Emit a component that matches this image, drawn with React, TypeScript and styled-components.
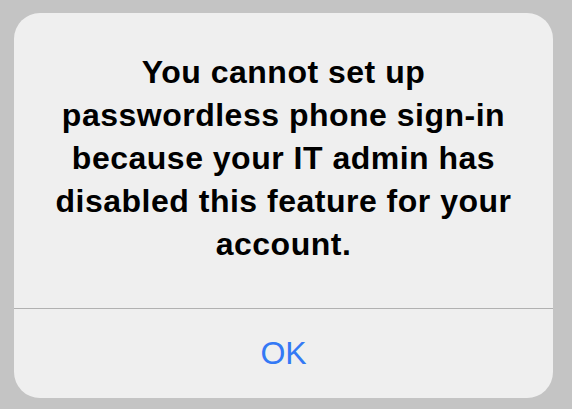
import React from 'react'
import styled, { createGlobalStyle } from 'styled-components'

const GlobalStyle = createGlobalStyle`
  html, body {
    margin: 0;
    padding: 0;
    background: #c4c4c4;
  }
  body {
    font-family: "Liberation Sans", Arial, sans-serif;
  }
`

const App: React.FC = () => {
  return (
    <StyledScreen>
      <GlobalStyle />
      <StyledAlert>
        <StyledMessage>
          You cannot set up
          <br />
          passwordless phone sign-in
          <br />
          because your IT admin has
          <br />
          disabled this feature for your
          <br />
          account.
        </StyledMessage>
        <StyledButton type="button">OK</StyledButton>
      </StyledAlert>
    </StyledScreen>
  )
}

const StyledScreen = styled.div`
  width: 572px;
  height: 409px;
  padding: 13px 0 0 14px;
  box-sizing: border-box;
  background: #c4c4c4;
  overflow: hidden;
`

const StyledAlert = styled.div`
  width: 539px;
  height: 385px;
  display: flex;
  flex-direction: column;
  background: #efefef;
  border-radius: 26px;
  overflow: hidden;
`

const StyledMessage = styled.p`
  margin: 0;
  height: 296px;
  padding-top: 38px;
  box-sizing: border-box;
  border-bottom: 1px solid #b1b1b1;
  font-size: 32px;
  line-height: 43px;
  font-weight: bold;
  color: #000;
  text-align: center;
  letter-spacing: 0.5px;
`

const StyledButton = styled.button`
  flex: 1;
  display: flex;
  align-items: center;
  justify-content: center;
  padding: 0;
  border: none;
  background: transparent;
  font-family: "Liberation Sans", Arial, sans-serif;
  font-size: 32px;
  color: #3479f5;
`

export default App
